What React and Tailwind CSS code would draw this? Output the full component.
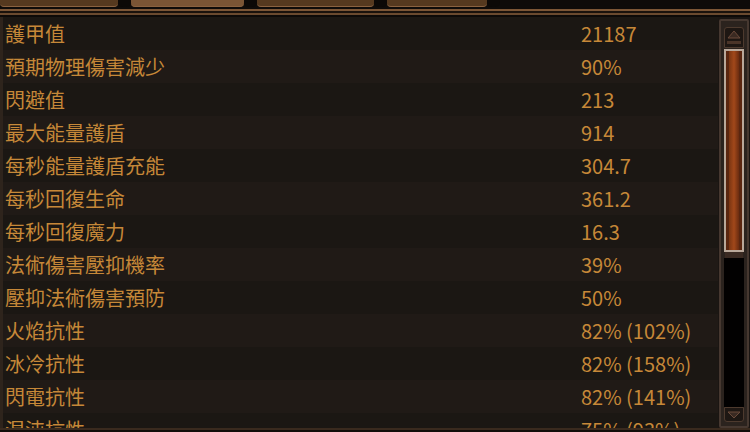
import React from "react";

const stats = [
  ["護甲值", "21187"],
  ["預期物理傷害減少", "90%"],
  ["閃避值", "213"],
  ["最大能量護盾", "914"],
  ["每秒能量護盾充能", "304.7"],
  ["每秒回復生命", "361.2"],
  ["每秒回復魔力", "16.3"],
  ["法術傷害壓抑機率", "39%"],
  ["壓抑法術傷害預防", "50%"],
  ["火焰抗性", "82% (102%)"],
  ["冰冷抗性", "82% (158%)"],
  ["閃電抗性", "82% (141%)"],
  ["混沌抗性", "75% (93%)"],
];

const Tab = ({ active, width }) => (
  <div
    className={`h-[7px] rounded-b-[4px] border-b border-[#8a6240] ${
      active ? "bg-[#7a5535]" : "bg-[#55391f]"
    } ${width}`}
  />
);

const Knob = () => <div className="h-[9px] w-[13px] -mt-[2px] rounded-full bg-[#0c0907]" />;

const StatRow = ({ label, value, odd }) => (
  <div
    className={`flex h-[33px] shrink-0 items-center ${
      odd ? "bg-[#201a16]" : "bg-[#1b1713]"
    }`}
  >
    <div className="w-[578px] pl-[2px]">{label}</div>
    <div>{value}</div>
  </div>
);

const ScrollBar = () => (
  <div className="flex w-[32px] flex-col bg-[#1a1512] pt-[2px]">
    <div className="mx-[1px] flex h-[409px] flex-col items-center rounded-[2px] border-2 border-[#463830] bg-[#2b231e] px-[5px] pt-[6px]">
      {/* top cap */}
      <div className="flex h-[21px] w-[20px] flex-col items-center justify-center gap-[2px] rounded-t-[3px] border border-[#4d3a2e] bg-[#1e1713]">
        <svg width="14" height="8" viewBox="0 0 14 8">
          <path d="M7 0 L13 7 L1 7 Z" fill="#3a2a22" stroke="#6a4a3a" strokeWidth="1" />
        </svg>
        <div className="h-[3px] w-[14px] bg-[#4a3428]" />
      </div>
      {/* thumb */}
      <div className="mt-[1px] flex h-[203px] w-[20px] justify-center border-2 border-[#b9a89a] bg-[#5a2610] px-[3px]">
        <div className="h-full w-full bg-gradient-to-r from-[#7a3512] via-[#a2481a] to-[#6a2c10]" />
      </div>
      <div className="h-[6px] w-[18px] bg-[#3a2a22]" />
      {/* track */}
      <div className="w-[20px] flex-1 bg-[#020101]" />
      {/* bottom cap */}
      <div className="mb-[4px] flex h-[15px] w-[20px] items-center justify-center rounded-b-[3px] border border-[#4d3a2e] bg-[#1e1713]">
        <svg width="14" height="8" viewBox="0 0 14 8">
          <path d="M1 1 L13 1 L7 7 Z" fill="#3a2a22" stroke="#6a4a3a" strokeWidth="1" />
        </svg>
      </div>
    </div>
  </div>
);

export default function App() {
  return (
    <div
      className="flex h-[432px] w-[750px] flex-col overflow-hidden bg-[#120e0b] text-[20px] leading-none text-[#c68838]"
      style={{ fontFamily: '"Noto Sans CJK TC", "Noto Sans", sans-serif' }}
    >
      {/* tabs */}
      <div className="flex h-[7px] items-start bg-[#0e0b09]">
        <Tab width="w-[118px]" />
        <Knob />
        <Tab active width="w-[113px]" />
        <Knob />
        <Tab width="w-[117px]" />
        <Knob />
        <Tab width="w-[100px]" />
        <Knob />
      </div>
      {/* frame lines */}
      <div className="h-[2px] bg-[#0e0b09]" />
      <div className="h-[2px] bg-[#7c5636]" />
      <div className="h-[2px] bg-[#1a120c]" />
      <div className="h-[2px] bg-[#6a4a2f]" />
      <div className="h-[2px] bg-[#0d0a08]" />
      {/* body */}
      <div className="flex min-h-0 flex-1 border-l-[3px] border-[#2e241c]">
        <div className="flex min-h-0 flex-1 flex-col overflow-hidden">
          {stats.map(([label, value], i) => (
            <StatRow key={label} label={label} value={value} odd={i % 2 === 1} />
          ))}
        </div>
        <ScrollBar />
      </div>
      <div className="h-[2px] bg-[#3a2a1e]" />
      <div className="h-[2px] bg-[#120e0b]" />
    </div>
  );
}
